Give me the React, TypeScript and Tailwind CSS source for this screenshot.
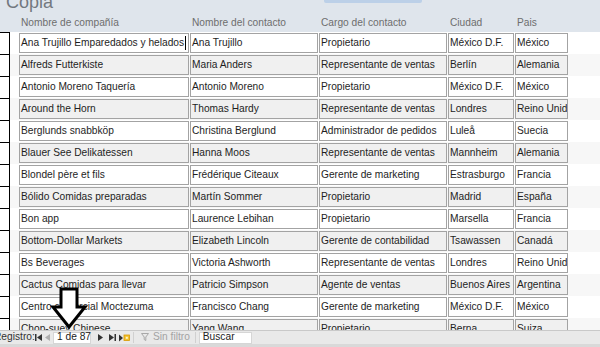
const rows: string[][] = [
  ["Ana Trujillo Emparedados y helados", "Ana Trujillo", "Propietario", "México D.F.", "México"],
  ["Alfreds Futterkiste", "Maria Anders", "Representante de ventas", "Berlín", "Alemania"],
  ["Antonio Moreno Taquería", "Antonio Moreno", "Propietario", "México D.F.", "México"],
  ["Around the Horn", "Thomas Hardy", "Representante de ventas", "Londres", "Reino Unido"],
  ["Berglunds snabbköp", "Christina Berglund", "Administrador de pedidos", "Luleå", "Suecia"],
  ["Blauer See Delikatessen", "Hanna Moos", "Representante de ventas", "Mannheim", "Alemania"],
  ["Blondel père et fils", "Frédérique Citeaux", "Gerente de marketing", "Estrasburgo", "Francia"],
  ["Bólido Comidas preparadas", "Martín Sommer", "Propietario", "Madrid", "España"],
  ["Bon app", "Laurence Lebihan", "Propietario", "Marsella", "Francia"],
  ["Bottom-Dollar Markets", "Elizabeth Lincoln", "Gerente de contabilidad", "Tsawassen", "Canadá"],
  ["Bs Beverages", "Victoria Ashworth", "Representante de ventas", "Londres", "Reino Unido"],
  ["Cactus Comidas para llevar", "Patricio Simpson", "Agente de ventas", "Buenos Aires", "Argentina"],
  ["Centro comercial Moctezuma", "Francisco Chang", "Gerente de marketing", "México D.F.", "México"],
  ["Chop-suey Chinese", "Yang Wang", "Propietario", "Berna", "Suiza"],
];

const widths = ["w-[170px]", "w-[128px]", "w-[128px]", "w-[66px]", "w-[53px]"];
const labels = ["Nombre de compañía", "Nombre del contacto", "Cargo del contacto", "Ciudad", "Pais"];

function Row({ cells, idx }: { cells: string[]; idx: number }) {
  const alt = idx % 2 === 1;
  return (
    <div className={`flex h-[22px] shrink-0 ${alt ? "bg-[#f7f7f7]" : "bg-white"}`}>
      <div className="w-[10px] h-full border-r border-t border-black bg-white" />
      <div className="flex gap-[1px] pl-[9px] pt-[1px]">
        {cells.map((c, i) => (
          <div
            key={i}
            className={`${widths[i]} h-[20px] border border-[#a3a3a3] ${alt ? "bg-[#f0f0f0]" : "bg-white"} flex items-center pl-[1px] overflow-hidden whitespace-nowrap leading-none text-[#1e1e1e]`}
          >
            {c}
            {idx === 0 && i === 0 && <span className="inline-block w-[1px] h-[14px] bg-black ml-[1px]" />}
          </div>
        ))}
      </div>
    </div>
  );
}

function NavIcon({ kind }: { kind: string }) {
  if (kind === "first")
    return (
      <svg width="7" height="7" viewBox="0 0 7 7">
        <rect x="0" y="0" width="1.5" height="7" fill="#333" />
        <path d="M7 0 L2 3.5 L7 7 Z" fill="#333" />
      </svg>
    );
  if (kind === "prev")
    return (
      <svg width="5" height="7" viewBox="0 0 5 7">
        <path d="M5 0 L0 3.5 L5 7 Z" fill="#b0b0b0" />
      </svg>
    );
  if (kind === "next")
    return (
      <svg width="5" height="7" viewBox="0 0 5 7">
        <path d="M0 0 L5 3.5 L0 7 Z" fill="#333" />
      </svg>
    );
  if (kind === "last")
    return (
      <svg width="7" height="7" viewBox="0 0 7 7">
        <path d="M0 0 L5 3.5 L0 7 Z" fill="#333" />
        <rect x="5.5" y="0" width="1.5" height="7" fill="#333" />
      </svg>
    );
  return (
    <svg width="11" height="8" viewBox="0 0 11 8">
      <path d="M0 0.5 L4 4 L0 7.5 Z" fill="#333" />
      <rect x="5" y="1" width="5.5" height="5.5" fill="#f2c230" stroke="#d99a00" strokeWidth="0.8" />
      <rect x="6.8" y="2.8" width="2" height="2" fill="#fff6c8" />
    </svg>
  );
}

export default function App() {
  return (
    <div className="w-[600px] h-[347px] overflow-hidden relative bg-white font-['Liberation_Sans',Arial,sans-serif] text-[10.2px] flex flex-col">
      {/* header */}
      <div className="h-[32px] shrink-0 bg-[#dfe5ec] flex flex-col relative">
        <div className="h-[11px] flex">
          <div className="pl-[6px] mt-[-7px] text-[18px] leading-none text-[#73787f]">Copia</div>
          <div className="ml-[271px] w-[98px] h-[3px] bg-[#bcd0e8] rounded-b-[2px]" />
        </div>
        <div className="flex gap-[1px] pl-[19px] pt-[4px] text-[#6e6e6e]">
          {labels.map((l, i) => (
            <div key={i} className={`${widths[i]} pl-[2px] whitespace-nowrap`}>
              {l}
            </div>
          ))}
        </div>
      </div>

      {/* records */}
      <div className="h-[298px] shrink-0 overflow-hidden flex flex-col">
        {rows.map((r, i) => (
          <Row key={i} cells={r} idx={i} />
        ))}
      </div>

      {/* navigation bar */}
      <div className="h-[14px] shrink-0 bg-[#e9e9e9] border-t border-[#c9c9c9] flex items-center text-[#333] leading-none whitespace-nowrap">
        <span className="ml-[-6px] w-[38px]">Registro:</span>
        <div className="w-[12px] flex justify-center">
          <NavIcon kind="first" />
        </div>
        <div className="w-[7px] flex justify-center">
          <NavIcon kind="prev" />
        </div>
        <div className="ml-[2px] w-[38px] h-[12px] bg-white border border-[#d6d6d6] flex items-center pl-[3px] text-[#222]">1 de 87</div>
        <div className="w-[16px] flex justify-center pl-[3px]">
          <NavIcon kind="next" />
        </div>
        <div className="w-[11px] flex justify-center">
          <NavIcon kind="last" />
        </div>
        <div className="w-[12px] flex justify-center">
          <NavIcon kind="new" />
        </div>
        <div className="ml-[3px] w-[1px] h-[11px] bg-[#d0d0d0]" />
        <div className="ml-[7px] flex items-center gap-[4px] text-[#a3a3a3]">
          <svg width="8" height="8" viewBox="0 0 8 8">
            <path d="M0.5 0.5 L7.5 0.5 L4.8 4 L4.8 7.5 L3.2 6.5 L3.2 4 Z" fill="none" stroke="#a8a8a8" strokeWidth="1" />
          </svg>
          <span>Sin filtro</span>
        </div>
        <div className="ml-[5px] w-[1px] h-[11px] bg-[#d0d0d0]" />
        <div className="ml-[3px] w-[53px] h-[12px] bg-white border border-[#d6d6d6] flex items-center pl-[3px] text-[#222]">Buscar</div>
      </div>
      <div className="flex-1 bg-[#d9d9d9]" />

      {/* annotation arrow */}
      <svg className="absolute left-0 top-0 pointer-events-none" width="600" height="347">
        <path d="M61 289 L77 289 L77 307 L85 307 L69 327 L53 307 L61 307 Z" fill="white" stroke="black" strokeWidth="3" strokeLinejoin="miter" />
      </svg>
    </div>
  );
}
